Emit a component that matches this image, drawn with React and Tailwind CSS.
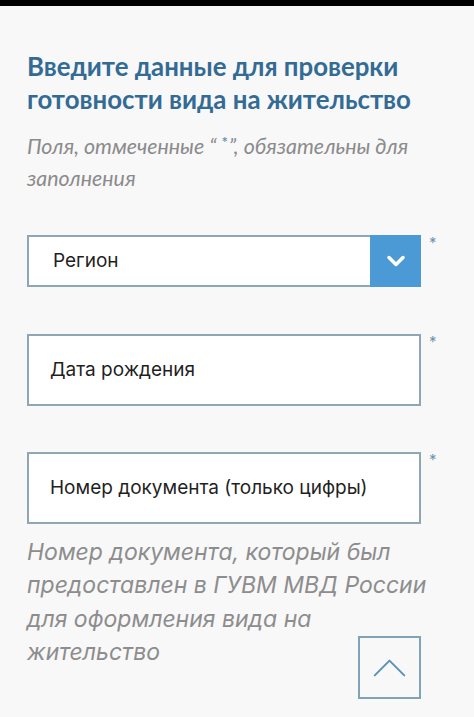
import { ChevronDown, ChevronUp } from 'lucide-react'

function Star() {
  return <span className="w-[41px] pl-[8px] text-[15px] leading-none text-[#6b96b3] font-[Inter]">*</span>
}

function Field({ label }) {
  return (
    <div className="flex items-start">
      <div className="flex-1 h-[72px] flex items-center pl-[21px] border-2 border-[#8fa6b4] bg-white text-[19px] text-[#1f1f1f]">
        {label}
      </div>
      <Star />
    </div>
  )
}

export default function App() {
  return (
    <div className="relative min-h-screen bg-[#f8f8f9] font-[Inter,sans-serif]">
      <div className="h-[6px] bg-black" />
      <div className="pl-[27px] pr-[12px] pt-[44px]">
        <h1 className="font-[Lato] text-[25.8px] font-bold leading-[33px] text-[#336b94]">
          Введите данные для проверки готовности вида на жительство
        </h1>
        <p className="mt-[14px] font-[Lato] text-[21.4px] italic leading-[32px] text-[#8b8b8b]">
          Поля, отмеченные “<span className="inline-block ml-[5px] mr-[1px] text-[12px] leading-none not-italic font-[Inter] text-[#5d8fb3] -translate-y-[8px]">*</span>”, обязательны для заполнения
        </p>

        <div className="mt-[41px] flex flex-col gap-[47px]">
          <div className="flex items-start">
            <div className="flex-1 h-[52px] flex border-2 border-[#8fa6b4] bg-white">
              <div className="flex-1 flex items-center pl-[24px] text-[19px] text-[#1f1f1f]">Регион</div>
              <div className="w-[51px] -my-[2px] -mr-[2px] bg-[#4b9ad5] flex items-center justify-center">
                <ChevronDown size={28} strokeWidth={3} className="text-white" />
              </div>
            </div>
            <Star />
          </div>
          <div className="flex flex-col gap-[46px]">
            <Field label="Дата рождения" />
            <Field label="Номер документа (только цифры)" />
          </div>
        </div>

        <p className="mt-[12px] pr-[14px] text-[23px] italic leading-[33.3px] text-[#8d8d8d]">
          Номер документа, который был предоставлен в ГУВМ МВД России для оформления вида на жительство
        </p>
      </div>

      <button className="absolute left-[358px] top-[636px] w-[63px] h-[63px] border-2 border-[#80a4b7] bg-[#f8f8f9] flex items-center justify-center">
        <ChevronUp size={60} strokeWidth={0.8} className="text-[#5a93b7]" />
      </button>
    </div>
  )
}
